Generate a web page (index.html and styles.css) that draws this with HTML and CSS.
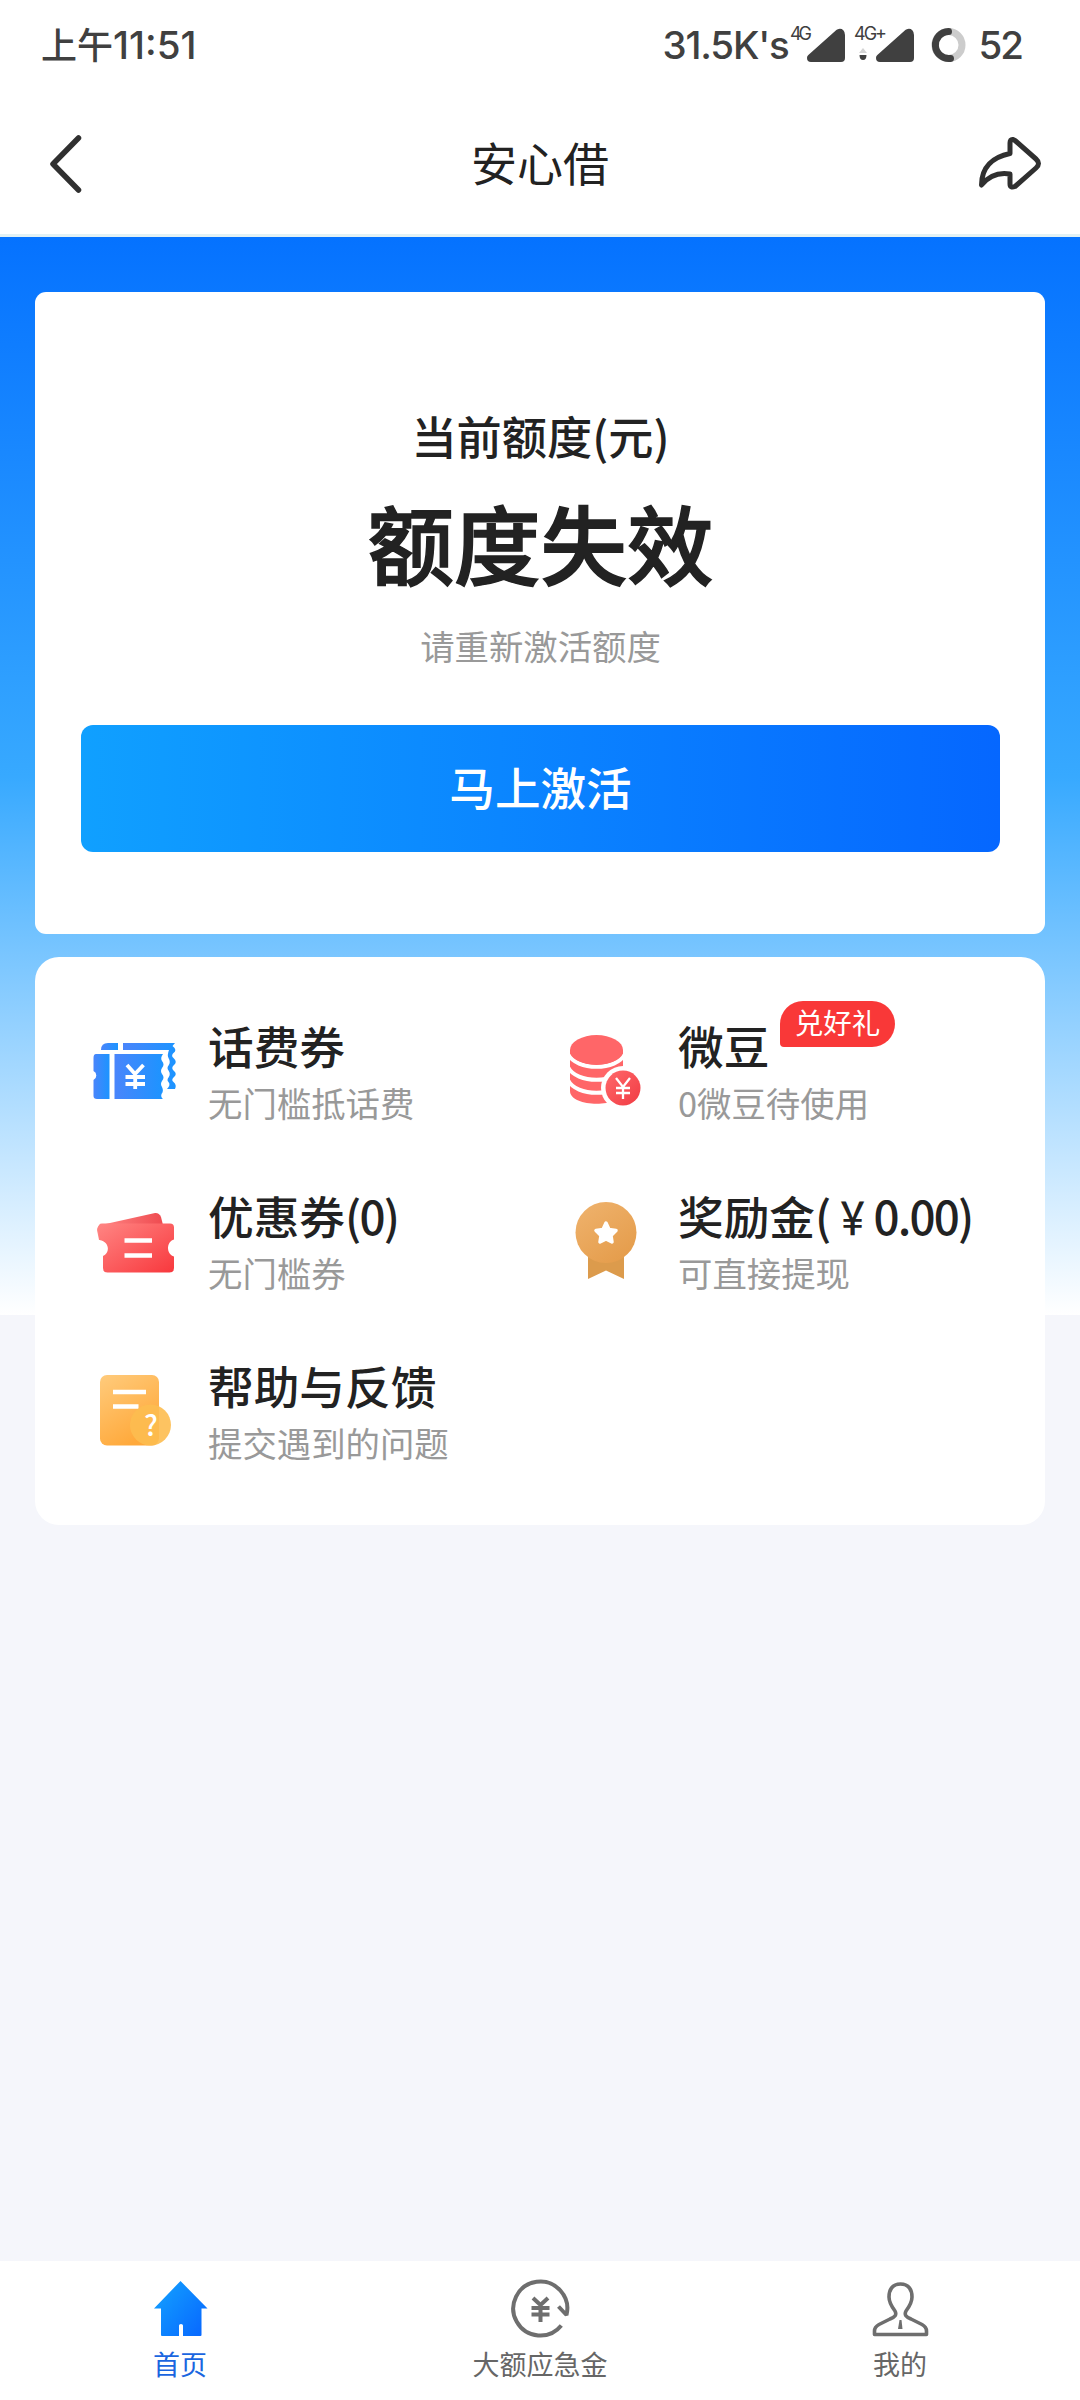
FILE: index.html
```html
<!DOCTYPE html>
<html lang="zh-CN">
<head>
<meta charset="utf-8">
<title>安心借</title>
<link rel="stylesheet" href="styles.css">
</head>
<body>
<div class="status">
  <div class="time"><span class="ampm">上午</span><span class="clock">11:51</span></div>
  <div class="indicators">
    <span class="speed">31.5K's</span>
    <svg class="signals" viewBox="788 20 180 50" width="180" height="50">
      <g fill="#404040" stroke="#404040" stroke-width="8" stroke-linejoin="round">
        <path d="M811 58 L839 33 Q841 32 841 35 V58Z"/>
        <path d="M880 58 L908 33 Q910 32 910 35 V58Z"/>
      </g>
      <text class="net" x="790" y="40" textLength="22">4G</text>
      <text class="net" x="854" y="40" textLength="33">4G+</text>
      <path d="M859 53 L863 48 L867 53Z" fill="#d4d4d4"/>
      <path d="M859.5 55 H866.5 Q866.5 60 863 60 Q859.5 60 859.5 55Z" fill="#404040"/>
      <circle cx="948.5" cy="45" r="13.5" fill="none" stroke="#ccc" stroke-width="7"/>
      <path d="M948.5 31.5 A13.5 13.5 0 1 0 950.5 58.4" fill="none" stroke="#404040" stroke-width="7" stroke-linecap="round"/>
    </svg>
    <span class="battery">52</span>
  </div>
</div>
<header class="topbar">
  <svg class="back" viewBox="46 130 40 68" width="40" height="68"><path d="M78.5 138 L53 164 L78.5 190" fill="none" stroke="#303030" stroke-width="5.5" stroke-linecap="round" stroke-linejoin="round"/></svg>
  <h1>安心借</h1>
  <svg class="share" viewBox="974 130 72 68" width="72" height="68"><path d="M1010 143 Q1010 139 1013 139.5 L1015 140.5 L1036 159 Q1041 163.5 1036 168 L1015 186.5 Q1010 188.5 1010 184 V174 C998 172 988 177 981.5 185 C981.5 167 993 157 1010 153.5Z" fill="none" stroke="#303030" stroke-width="5" stroke-linejoin="round"/></svg>
</header>
<main class="content">
  <section class="quota">
    <h2>当前额度(元)</h2>
    <div class="amount">额度失效</div>
    <p>请重新激活额度</p>
    <button class="activate">马上激活</button>
  </section>
  <section class="services">
    <div class="service">
      <svg viewBox="90 1025 90 90" width="90" height="90">
        <defs><linearGradient id="blue"><stop offset="0" stop-color="#4a85fb"/><stop offset="1" stop-color="#1c94ff"/></linearGradient></defs>
        <g fill="url(#blue)">
          <path d="M101 1050 Q101 1043 108 1043 H118 V1050Z"/>
          <path d="M123 1043 H175 L172.5 1046 Q178 1050 173 1053.5 Q171 1056 173.5 1058 Q178 1062 173.5 1065.5 Q171 1068 173.5 1070.5 Q178 1074 173.5 1077.5 Q171 1080 173.5 1082 Q177 1085 175 1089 H167 Q171 1085 168.5 1082 Q166.500 1080 168.5 1077.5 Q171 1074 168.5 1070.5 Q166.5 1068 168.5 1065.5 Q171 1062 168.5 1058 Q167 1055 169 1050 H123Z"/>
          <path d="M96 1054 H109.5 V1099 H97 Q93.5 1099 93.5 1096 V1080 A5 5 0 0 0 93.5 1071 V1058 Q93.5 1054 96 1054Z"/>
          <path d="M114.5 1054 H163 Q160 1058 162 1061 Q165 1064.5 162 1068 Q160 1071 162 1074 Q165 1077.5 162 1081 Q160 1084 162 1087 Q164 1091 161.5 1094 Q160.500 1097 163 1099 H114.5Z"/>
        </g>
        <path d="M127 1065 L135 1074 L143.5 1065 M125.5 1077 H145 M125.5 1084 H145 M135.2 1075 V1089" fill="none" stroke="#fff" stroke-width="3.8"/>
      </svg>
      <div class="label"><h3>话费券</h3><p>无门槛抵话费</p></div>
    </div>
    <div class="service">
      <svg viewBox="560 1025 90 90" width="90" height="90">
        <defs><linearGradient id="coin" x2="1" y2="1"><stop offset="0" stop-color="#ff696b"/><stop offset="1" stop-color="#f13b43"/></linearGradient></defs>
        <path d="M570 1050 V1091 C570 1108 623 1108 623 1091 V1050Z" fill="#ff6668"/>
        <path d="M568 1054 C576 1071 617 1071 625 1054 M568 1067 C576 1084 617 1084 625 1067 M568 1080 C576 1097 617 1097 625 1080" fill="none" stroke="#fff" stroke-width="4"/>
        <ellipse cx="596.5" cy="1050" rx="26.5" ry="15" fill="#ff6668"/>
        <circle cx="623" cy="1088" r="22" fill="#fff"/>
        <circle cx="623" cy="1088" r="17.5" fill="url(#coin)"/>
        <path d="M616 1078 L623 1087 L630 1078 M616 1088 H630 M616 1093 H630 M623 1087 V1099" fill="none" stroke="#fff" stroke-width="2.3"/>
      </svg>
      <div class="label"><h3>微豆<span class="badge">兑好礼</span></h3><p>0微豆待使用</p></div>
    </div>
    <div class="service">
      <svg viewBox="90 1195 90 90" width="90" height="90">
        <defs><linearGradient id="red" x2="1" y2="1"><stop offset="0" stop-color="#ff8583"/><stop offset="1" stop-color="#f8383d"/></linearGradient>
        <linearGradient id="redback"><stop offset="0" stop-color="#ff8886"/><stop offset="1" stop-color="#ef4b50"/></linearGradient></defs>
        <path d="M99 1240 L97 1230 Q97 1226 101 1225 L155 1213 Q159 1212.5 161 1217 L163 1225 V1240Z" fill="url(#redback)"/>
        <path d="M102 1223.5 H170 Q174 1223.5 174 1227.5 V1239.5 C166 1242 166 1254 174 1256.5 V1268 Q174 1272.5 169.5 1272.5 H107.5 Q103 1272.5 103 1268 V1256 C110 1253 110 1242 99.5 1240 L98 1229 Q98 1223.5 102 1223.5Z" fill="url(#red)"/>
        <path d="M124.5 1240.5 H152 M124.5 1255.5 H152" stroke="#fff" stroke-width="4.7"/>
      </svg>
      <div class="label"><h3>优惠券<span class="count">(0)</span></h3><p>无门槛券</p></div>
    </div>
    <div class="service">
      <svg viewBox="560 1195 90 90" width="90" height="90">
        <defs><linearGradient id="medal" x2=".7" y2="1"><stop offset="0" stop-color="#efb36e"/><stop offset="1" stop-color="#e59d4c"/></linearGradient></defs>
        <path d="M588 1250 H624 V1279 L606 1270.5 L588 1279Z" fill="#dc9b4c"/>
        <circle cx="606" cy="1232.5" r="30.5" fill="url(#medal)"/>
        <path d="M606 1223 L609 1229.5 L616 1230.5 L611 1235.5 L612 1242 L606 1239 L600 1242 L601 1235.5 L596 1230.5 L603 1229.5Z" fill="#fff" stroke="#fff" stroke-width="3.5" stroke-linejoin="round"/>
      </svg>
      <div class="label"><h3>奖励金<span class="count">(<span class="yen">￥</span>0.00)</span></h3><p>可直接提现</p></div>
    </div>
    <div class="service">
      <svg viewBox="90 1365 90 90" width="90" height="90">
        <defs><linearGradient id="note" x2=".5" y2="1"><stop offset="0" stop-color="#ffcb7c"/><stop offset="1" stop-color="#ffa93b"/></linearGradient></defs>
        <rect x="100" y="1375" width="59" height="70.5" rx="7" fill="url(#note)"/>
        <path d="M113 1392 H146 M113 1406.5 H138.5" stroke="#fff" stroke-width="4.5"/>
        <circle cx="150.5" cy="1425" r="20.5" fill="#fdbd50" fill-opacity=".9"/>
        <text class="question" x="151" y="1436" text-anchor="middle">?</text>
      </svg>
      <div class="label"><h3>帮助与反馈</h3><p>提交遇到的问题</p></div>
    </div>
  </section>
</main>
<nav class="tabs">
  <div class="tab active">
    <svg viewBox="150 2278 60 62" width="60" height="62">
      <defs><linearGradient id="home" x2="1" y2=".8"><stop offset="0" stop-color="#13a4ff"/><stop offset="1" stop-color="#086aff"/></linearGradient></defs>
      <path d="M180.5 2281 L207.5 2308.5 H201.5 V2335 Q201.5 2336 200.5 2336 H183 V2325.5 Q183 2324 181 2324 Q179 2324 179 2325.5 V2336 H162 Q161 2336 161 2335 V2308.5 H154Z" fill="url(#home)"/>
    </svg>
    <span>首页</span>
  </div>
  <div class="tab">
    <svg viewBox="510 2278 60 62" width="60" height="62">
      <g fill="none" stroke="#6e6e6e" stroke-width="4">
        <path d="M561.3 2325.5 A27 27 0 1 1 566.5 2315 L558.5 2306.5" stroke-linejoin="bevel"/>
        <path d="M533 2298 L540.5 2305 L548 2298 M531.5 2308 H549.5 M531.5 2314.5 H549.5 M540.5 2305 V2322"/>
      </g>
    </svg>
    <span>大额应急金</span>
  </div>
  <div class="tab">
    <svg viewBox="870 2278 60 62" width="60" height="62">
      <path d="M900.5 2284 C892 2284 889 2290 889 2297 C889 2302 892 2307 895 2311 C897 2315 895 2317 890 2319 L879 2324.5 Q874.5 2327 874.5 2331 V2334.5 H926.5 V2331 Q926.5 2327 922 2324.5 L911 2319 C906 2317 904 2315 906 2311 C909 2307 912 2302 912 2297 C912 2290 909 2284 900.5 2284Z" fill="none" stroke="#6e6e6e" stroke-width="3.6" stroke-linejoin="round"/>
      <path d="M899.5 2320 H901.5 L902.5 2329 H898Z" fill="#6e6e6e"/>
    </svg>
    <span>我的</span>
  </div>
</nav>
</body>
</html>
```
FILE: styles.css
```css
* { box-sizing: border-box; }
h1, h2, h3, p { margin: 0; }
svg { display: block; flex: none; }
body {
  margin: 0;
  width: 1080px;
  height: 2400px;
  display: flex;
  flex-direction: column;
  background: #f5f6fb;
  color: #222;
  font-family: "Noto Sans CJK SC", sans-serif;
}
.status {
  height: 90px;
  padding: 0 58px 0 41px;
  display: flex;
  justify-content: space-between;
  align-items: center;
  background: #fff;
  color: #404040;
  font-weight: 500;
}
.time, .indicators { display: flex; align-items: center; height: 50px; }
.ampm { font-size: 36px; line-height: 50px; padding-bottom: 5px; }
.clock, .speed, .battery {
  font-family: Inter, sans-serif;
  font-size: 38.5px;
  line-height: 50px;
}
.clock { letter-spacing: 0; }
.speed { letter-spacing: -1.2px; }
.battery { margin-left: 10px; letter-spacing: -2px; }
.net { font: 400 18px Inter, sans-serif; fill: #404040; }
.topbar {
  height: 147px;
  padding: 3px 34px 0 46px;
  display: flex;
  justify-content: space-between;
  align-items: center;
  background: #fff;
  border-bottom: 3px solid #e2f1f4;
}
.topbar h1 { margin-left: 20px; padding-bottom: 6px; font-size: 46px; line-height: 68px; font-weight: 400; }
.content {
  flex: 1;
  padding: 55px 35px 0;
  display: flex;
  flex-direction: column;
  gap: 23px;
  background: linear-gradient(#0572ff, #37a9ff 50%, #fff) 0 0 / 100% 1078px no-repeat;
}
.quota {
  height: 642px;
  padding: 111px 45px 0 46px;
  display: flex;
  flex-direction: column;
  align-items: center;
  background: #fff;
  border-radius: 11px;
}
.quota h2 { font-size: 45.2px; line-height: 66px; font-weight: 500; }
.amount {
  margin-top: 10px;
  font-size: 86.5px;
  line-height: 126px;
  font-weight: 500;
  -webkit-text-stroke: 1.5px #222;
}
.quota p { margin-top: 15px; font-size: 34.4px; line-height: 50px; color: #999; }
.activate {
  width: 100%;
  height: 127px;
  margin-top: 55px;
  padding: 0 0 5px;
  border: 0;
  border-radius: 12px;
  background: linear-gradient(90deg, #10a0ff, #0567ff);
  color: #fff;
  font: 500 45.6px "Noto Sans CJK SC", sans-serif;
}
.services {
  height: 568px;
  padding: 58px 0 0 55px;
  display: grid;
  grid-template-columns: 470px 1fr;
  grid-auto-rows: 170px;
  background: #fff;
  border-radius: 24px;
}
.service { display: flex; align-items: flex-start; gap: 28px; }
.service svg { margin-top: 10px; }
.label h3 { position: relative; font-size: 45.7px; line-height: 60px; font-weight: 500; white-space: nowrap; }
.label p { margin-top: 2px; font-size: 34.4px; line-height: 50px; color: #999; }
.count { letter-spacing: -1.8px; }
.yen { display: inline-block; transform: scaleX(.78); }
.badge {
  position: absolute;
  left: 102px;
  top: -14px;
  width: 115px;
  height: 46px;
  border-radius: 23px 23px 23px 4px;
  background: #f93838;
  color: #fff;
  font-size: 28.5px;
  line-height: 42px;
  font-weight: 400;
  text-align: center;
}
.question { font: 500 28px "Noto Sans CJK SC", sans-serif; fill: #fff; }
.tabs {
  height: 139px;
  display: grid;
  grid-template-columns: repeat(3, 1fr);
  background: #fff;
}
.tab {
  padding-top: 17px;
  display: flex;
  flex-direction: column;
  align-items: center;
  gap: 4px;
  color: #666;
  font-size: 27px;
  line-height: 40px;
}
.active { color: #1a66e0; }
```
